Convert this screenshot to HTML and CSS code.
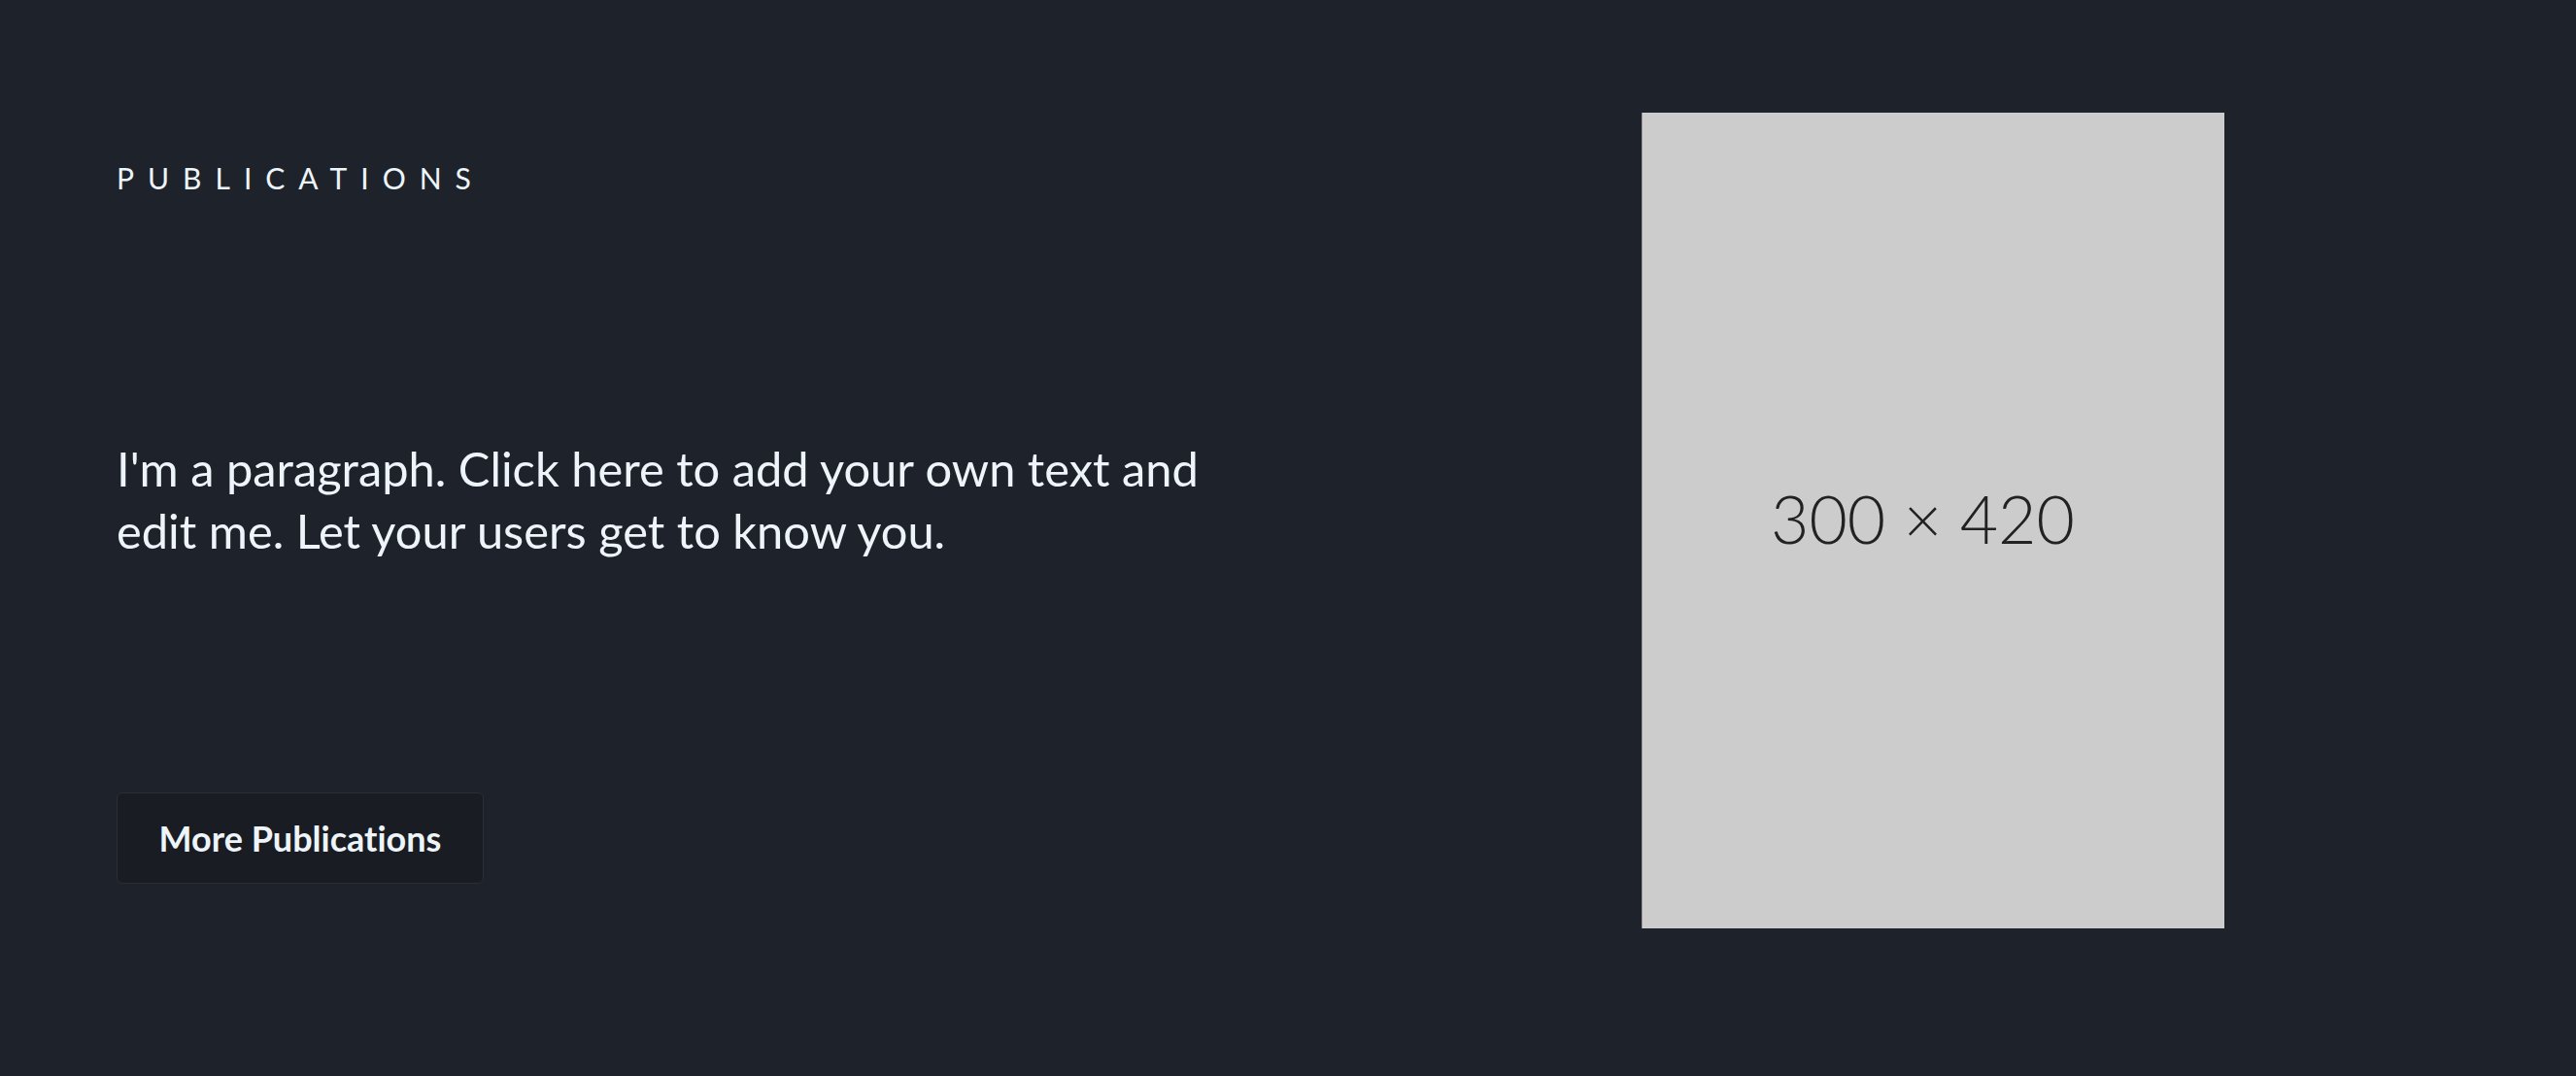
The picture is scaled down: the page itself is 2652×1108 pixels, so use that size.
FILE: index.html
```html
<!DOCTYPE html>
<html lang="en">
<head>
<meta charset="utf-8">
<title>Publications</title>
<link rel="stylesheet" href="styles.css">
</head>
<body>
<section class="pubs">
  <div class="pubs-text">
    <h2 class="pubs-label">PUBLICATIONS</h2>
    <p class="pubs-para">I'm a paragraph. Click here to add your own text and edit me. Let your users get to know you.</p>
    <a class="pubs-btn" href="#">More Publications</a>
  </div>
  <div class="pubs-media">
    <div class="placeholder"><span class="placeholder-text">300 × 420</span></div>
  </div>
</section>
</body>
</html>
```
FILE: styles.css
```css
html, body {
  margin: 0;
  padding: 0;
  background: #1e232b;
}
body {
  font-family: "Lato", "Noto Sans", sans-serif;
  color: #eef5fa;
  font-variant-ligatures: none;
}
.pubs {
  display: flex;
  height: 1108px;
  box-sizing: border-box;
  padding: 116px 0 0 120px;
}
.pubs-text {
  width: 1570px;
  display: flex;
  flex-direction: column;
  align-items: flex-start;
}
.pubs-label {
  margin: 52px 0 0 0;
  font-size: 30px;
  line-height: 30px;
  font-weight: 400;
  letter-spacing: 14px;
}
.pubs-para {
  margin: 252px 0 0 0;
  width: 1170px;
  font-size: 48.8px;
  line-height: 64px;
  font-weight: 400;
}
.pubs-btn {
  margin-top: 238px;
  width: 378px;
  height: 94px;
  box-sizing: border-box;
  display: flex;
  align-items: center;
  justify-content: center;
  background: #191c22;
  border: 1px solid #2a2e36;
  border-radius: 6px;
  color: #eef5fa;
  text-decoration: none;
  font-size: 36px;
  font-weight: 700;
}
.pubs-media {
  width: 600px;
}
.placeholder {
  width: 600px;
  height: 840px;
  background: #cccccc;
  border-left: 1px solid #9a9a9a;
  box-sizing: border-box;
  display: flex;
  align-items: center;
  justify-content: center;
}
.placeholder-text {
  margin: 0 22px 6px 0;
  font-family: "Lato", sans-serif;
  font-weight: 300;
  font-size: 68px;
  color: #222222;
}
```
